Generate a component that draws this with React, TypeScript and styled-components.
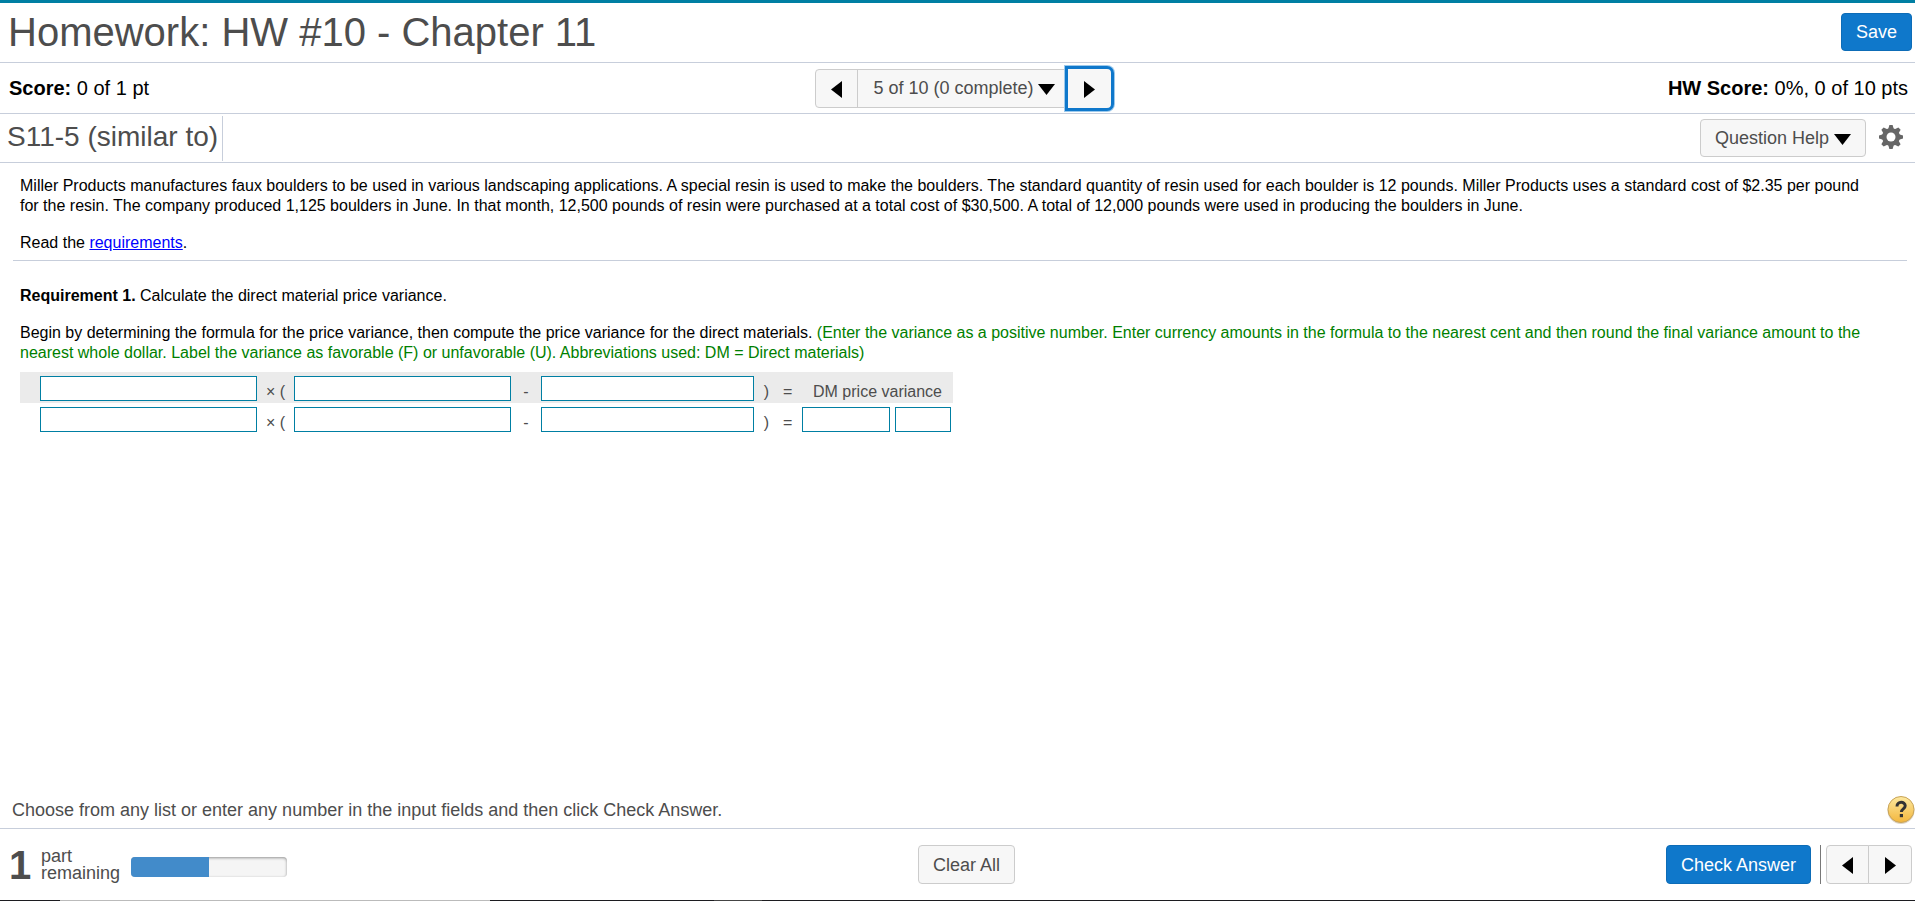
import React from "react";
import styled, { createGlobalStyle } from "styled-components";

const GlobalStyle = createGlobalStyle`
  *, *::before, *::after { box-sizing: border-box; }
  body { margin: 0; background: #fff; color: #000; }
  body, button, input { font-family: "Liberation Sans", Arial, Helvetica, sans-serif; }
`;

const rule = "#c7cedb";
const ink = "#4d4d4d";
const blue = "#0f78cb";
const teal = "#007fa3";

const Page = styled.div`
  display: flex;
  flex-direction: column;
  min-height: 100vh;
  border-top: 3px solid ${teal};
`;

const TitleBar = styled.header`
  display: flex;
  align-items: center;
  justify-content: space-between;
  height: 60px;
  padding: 0 3px 2px 8px;
  border-bottom: 1px solid ${rule};
`;

const Title = styled.h1`
  margin: 0;
  font-size: 40px;
  font-weight: 400;
  line-height: 48px;
  color: ${ink};
`;

const ThreeColumns = styled.div`
  display: grid;
  grid-template-columns: 1fr auto 1fr;
  align-items: center;
`;

const ScoreBar = styled(ThreeColumns)`
  height: 51px;
  padding: 0 7px 0 9px;
  border-bottom: 1px solid ${rule};
`;

const Score = styled.div<{ $end?: boolean }>`
  font-size: 20px;
  line-height: 24px;
  text-align: ${(p) => (p.$end ? "right" : "left")};
`;

const Centre = styled.div`
  display: flex;
  padding-left: 12px;
`;

const Button = styled.button<{ $primary?: boolean; $tall?: boolean }>`
  display: flex;
  align-items: center;
  gap: 5px;
  height: ${(p) => (p.$tall ? 39 : 38)}px;
  padding: 0 14px;
  border: 1px solid ${(p) => (p.$primary ? "#0d6cb7" : "#ccc")};
  border-radius: 4px;
  background: ${(p) => (p.$primary ? blue : "#f7f7f7")};
  color: ${(p) => (p.$primary ? "#fff" : ink)};
  font-size: 18px;
  line-height: 24px;
  white-space: nowrap;
`;

const Group = styled.div`
  display: flex;
  align-items: center;
`;

const StepButton = styled(Button)<{ $side: "left" | "right"; $focused?: boolean }>`
  justify-content: center;
  width: ${(p) => (p.$side === "left" ? 43 : 44)}px;
  padding: 0;
  border-radius: ${(p) => (p.$side === "left" ? "4px 0 0 4px" : "0 4px 4px 0")};
  margin-left: ${(p) => (p.$side === "left" ? 0 : -1)}px;
  ${(p) =>
    p.$focused &&
    `
    width: 49px;
    height: 45px;
    border: 3px solid ${blue};
    border-radius: 0 7px 7px 0;
    box-shadow: 0 0 0 1px #9cc9ec;
  `}
`;

const Picker = styled(Button)`
  margin-left: -1px;
  border-radius: 0;
  border-right-width: 0;
  padding: 0 11px 0 15px;
  gap: 4px;
`;

const QuestionBar = styled.div`
  display: flex;
  align-items: center;
  justify-content: space-between;
  height: 49px;
  padding: 0 12px 0 7px;
  border-bottom: 1px solid ${rule};
`;

const QuestionName = styled.h2`
  margin: 0;
  padding: 0 4px 4px 0;
  border-right: 1px solid ${rule};
  color: ${ink};
  font-size: 28px;
  font-weight: 400;
  line-height: 41px;
`;

const Tools = styled.div`
  display: flex;
  align-items: center;
  gap: 13px;
`;

const IconButton = styled.button`
  display: flex;
  padding: 0 0 2px;
  border: 0;
  background: none;
`;

const Main = styled.main`
  flex: 1;
  padding: 13px 8px 24px 13px;
  font-size: 16px;
  line-height: 20px;
`;

const Block = styled.section`
  padding: 0 32px 0 7px;
`;

const Text = styled.p`
  margin: 0 0 17px;
`;

const Instruction = styled.span`
  color: #007f00;
`;

const Link = styled.a`
  color: #00f;
`;

const Divider = styled.hr`
  margin: -10px 0 25px;
  border: 0;
  border-top: 1px solid ${rule};
`;

const Formula = styled.div`
  width: fit-content;
  margin-top: -8px;
  color: ${ink};
`;

const FormulaRow = styled.div<{ $shaded?: boolean }>`
  display: grid;
  grid-template-columns: 217px 37px 217px 30px 213px 48px 151px;
  align-items: center;
  height: 31px;
  padding: 2px 0 0 20px;
  background: ${(p) => (p.$shaded ? "#ebebeb" : "transparent")};
`;

const Operator = styled.span<{ $gap?: number }>`
  display: flex;
  justify-content: center;
  gap: ${(p) => p.$gap ?? 0}px;
  padding-top: 6px;
`;

const Result = styled.div`
  display: flex;
  gap: 5px;
`;

const Field = styled.input<{ $width?: number }>`
  width: ${(p) => (p.$width ? `${p.$width}px` : "100%")};
  height: 25px;
  padding: 0 4px;
  border: 1px solid ${teal};
  border-radius: 0;
  background: #fff;
  font-size: 16px;
`;

const HintBar = styled.div`
  display: flex;
  align-items: center;
  justify-content: space-between;
  height: 35px;
  padding-left: 12px;
  border-bottom: 1px solid ${rule};
  color: ${ink};
  font-size: 18px;
  line-height: 24px;
`;

const Hint = styled.span`
  padding-bottom: 2px;
`;

const Footer = styled(ThreeColumns)`
  height: 71px;
  padding: 0 3px 0 9px;
`;

const BottomEdge = styled.div`
  height: 1px;
  background: linear-gradient(
    to right,
    #1c1c20 60px,
    #bbb 60px,
    #bbb 490px,
    #1c1c20 490px,
    #1c1c20 714px,
    #444 714px,
    #444 762px,
    #1c1c20 762px
  );
`;

const Progress = styled.div`
  display: flex;
  align-items: center;
  color: ${ink};
`;

const Count = styled.strong`
  width: 32px;
  font-size: 40px;
  line-height: 40px;
`;

const Remaining = styled.span`
  width: 90px;
  font-size: 18px;
  line-height: 17px;
`;

const Track = styled.div`
  width: 156px;
  height: 20px;
  margin-top: 4px;
  overflow: hidden;
  border-radius: 4px;
  background: #f5f5f5;
  box-shadow: inset 0 1px 3px rgba(0, 0, 0, 0.4);
`;

const Bar = styled.div`
  height: 100%;
  background: #428bca;
`;

const Actions = styled.div`
  display: flex;
  justify-content: flex-end;
`;

const Separator = styled.span`
  width: 1px;
  margin: 0 5px 0 9px;
  background: #777;
`;

const ArrowIcon = styled.svg`
  flex: none;
  margin-top: 2px;
`;

const arrows = {
  left: { w: 11, h: 17, points: "11,0 11,17 0,8.5" },
  right: { w: 11, h: 17, points: "0,0 11,8.5 0,17" },
  down: { w: 17, h: 11, points: "0,0 17,0 8.5,11" },
};

function Arrow({ to }: { to: keyof typeof arrows }) {
  const a = arrows[to];
  return (
    <ArrowIcon width={a.w} height={a.h} viewBox={`0 0 ${a.w} ${a.h}`} aria-hidden="true">
      <polygon points={a.points} fill="#000" />
    </ArrowIcon>
  );
}

function Gear() {
  return (
    <svg width="24" height="24" viewBox="0 0 24 24" aria-hidden="true">
      <g fill="#666">
        {[0, 45, 90, 135].map((r) => (
          <path key={r} d="M10.4 0h3.2l1.2 4v16l-1.2 4h-3.2l-1.2-4V4z" transform={`rotate(${r} 12 12)`} />
        ))}
        <circle cx="12" cy="12" r="9" />
      </g>
      <circle cx="12" cy="12" r="4.5" fill="#fff" />
    </svg>
  );
}

function HelpIcon() {
  return (
    <svg width="28" height="30" viewBox="0 0 28 30" aria-hidden="true">
      <defs>
        <linearGradient id="gold" x1="0" y1="0" x2="0" y2="1">
          <stop offset="0" stopColor="#fde9a0" />
          <stop offset="1" stopColor="#f3b63c" />
        </linearGradient>
      </defs>
      <circle cx="14" cy="15.5" r="13.5" fill="#b9a88a" opacity="0.5" />
      <circle cx="14" cy="14.5" r="13" fill="url(#gold)" stroke="#c9a458" />
      <path
        d="M10 11.4c0-5.4 8.2-5.2 8.2-.6 0 3.2-3.8 3-3.8 6.2"
        fill="none"
        stroke="#333"
        strokeWidth="3"
      />
      <rect x="12.8" y="19" width="3.2" height="3.2" fill="#333" />
    </svg>
  );
}

function FormulaInputs({ name, result, shaded }: { name: string; result: React.ReactNode; shaded?: boolean }) {
  return (
    <FormulaRow $shaded={shaded}>
      <Field aria-label={`${name} multiplier`} />
      <Operator>× (</Operator>
      <Field aria-label={`${name} first cost`} />
      <Operator>-</Operator>
      <Field aria-label={`${name} second cost`} />
      <Operator $gap={14}>
        <span>)</span>
        <span>=</span>
      </Operator>
      {result}
    </FormulaRow>
  );
}

export default function App() {
  return (
    <>
      <GlobalStyle />
      <Page>
        <TitleBar>
          <Title>Homework: HW #10 - Chapter 11</Title>
          <Button $primary>Save</Button>
        </TitleBar>
        <ScoreBar>
          <Score>
            <b>Score:</b> 0 of 1 pt
          </Score>
          <Centre>
            <Group>
              <StepButton $tall $side="left" aria-label="Previous question">
                <Arrow to="left" />
              </StepButton>
              <Picker $tall>
                5 of 10 (0 complete)
                <Arrow to="down" />
              </Picker>
              <StepButton $side="right" $focused aria-label="Next question">
                <Arrow to="right" />
              </StepButton>
            </Group>
          </Centre>
          <Score $end>
            <b>HW Score:</b> 0%, 0 of 10 pts
          </Score>
        </ScoreBar>
        <QuestionBar>
          <QuestionName>S11-5 (similar to)</QuestionName>
          <Tools>
            <Button>
              Question Help
              <Arrow to="down" />
            </Button>
            <IconButton aria-label="Settings">
              <Gear />
            </IconButton>
          </Tools>
        </QuestionBar>
        <Main>
          <Block>
            <Text>
              Miller Products manufactures faux boulders to be used in various landscaping applications. A special resin
              is used to make the boulders. The standard quantity of resin used for each boulder is 12 pounds. Miller
              Products uses a standard cost of $2.35 per pound for the resin. The company produced 1,125 boulders in
              June. In that month, 12,500 pounds of resin were purchased at a total cost of $30,500. A total of 12,000
              pounds were used in producing the boulders in June.
            </Text>
            <Text>
              Read the <Link href="#requirements">requirements</Link>.
            </Text>
          </Block>
          <Divider />
          <Block>
            <Text>
              <b>Requirement 1.</b> Calculate the direct material price variance.
            </Text>
            <Text>
              Begin by determining the formula for the price variance, then compute the price variance for the direct
              materials.{" "}
              <Instruction>
                (Enter the variance as a positive number. Enter currency amounts in the formula to the nearest cent and
                then round the final variance amount to the nearest whole dollar. Label the variance as favorable (F) or
                unfavorable (U). Abbreviations used: DM = Direct materials)
              </Instruction>
            </Text>
            <Formula>
              <FormulaInputs name="Formula" shaded result={<Operator>DM price variance</Operator>} />
              <FormulaInputs
                name="Computation"
                result={
                  <Result>
                    <Field $width={88} aria-label="Variance amount" />
                    <Field $width={56} aria-label="Favorable or unfavorable" />
                  </Result>
                }
              />
            </Formula>
          </Block>
        </Main>
        <HintBar>
          <Hint>Choose from any list or enter any number in the input fields and then click Check Answer.</Hint>
          <IconButton aria-label="Help">
            <HelpIcon />
          </IconButton>
        </HintBar>
        <Footer as="footer">
          <Progress>
            <Count>1</Count>
            <Remaining>
              part
              <br />
              remaining
            </Remaining>
            <Track role="progressbar" aria-label="Parts complete" aria-valuenow={50}>
              <Bar style={{ width: "50%" }} />
            </Track>
          </Progress>
          <Centre>
            <Button $tall>Clear All</Button>
          </Centre>
          <Actions>
            <Button $primary $tall>
              Check Answer
            </Button>
            <Separator />
            <StepButton $tall $side="left" aria-label="Previous part">
              <Arrow to="left" />
            </StepButton>
            <StepButton $tall $side="right" aria-label="Next part">
              <Arrow to="right" />
            </StepButton>
          </Actions>
        </Footer>
        <BottomEdge />
      </Page>
    </>
  );
}
